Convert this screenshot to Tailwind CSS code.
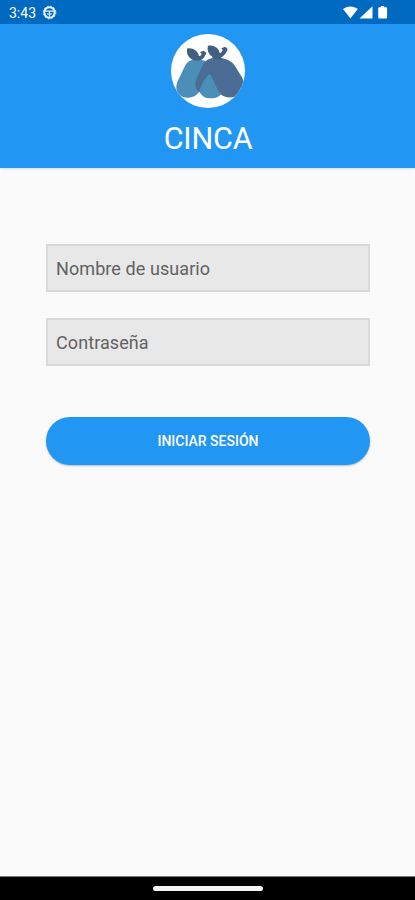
<!DOCTYPE html>
<html lang="es">
<head>
<meta charset="utf-8">
<title>CINCA</title>
<script src="https://cdn.jsdelivr.net/npm/@tailwindcss/browser@4"></script>
</head>
<body class="flex h-[900px] w-[415px] flex-col overflow-hidden bg-[#fafafa] font-['Roboto',sans-serif]">
  <div class="flex h-6 shrink-0 items-center bg-[#0069c0] pl-[9px] pr-[26px] text-white">
    <span class="w-[28px] pt-[2px] text-[14px] leading-none">3:43</span>
    <svg class="ml-[5px] mt-[1px] size-[15px]" viewBox="0 0 15 15" fill="none" stroke="#e8f2fc">
      <circle cx="7.5" cy="7.5" r="5.2" stroke-width="2"/>
      <circle cx="7.5" cy="7.5" r="6.4" stroke-width=".9" stroke-dasharray="1.6 1.75"/>
      <path d="M3 6.200h9M7.500 6.400v5.400M5 9h5" stroke-width="1.200"/>
    </svg>
    <svg class="ml-auto mt-[1px] h-[15px] w-[46px]" viewBox="0 0 46 15" fill="#fff">
      <path d="M0 4.100C4.200.6 10.600.6 14.800 4.100L7.400 13.400Z"/>
      <path d="M29.500 1.300V13.400H16.500Z"/>
      <path d="M37.800 1h3.400v1.200h1.900q1 0 1 1v9.300q0 1-1 1h-6.900q-1 0-1-1V3.200q0-1 1-1h1.600Z"/>
    </svg>
  </div>
  <header class="flex h-36 shrink-0 flex-col items-center bg-[#2196f3] pt-[10px] shadow-[0_1px_2px_rgba(0,0,0,0.12)]">
    <svg class="size-[74px]" viewBox="18 18 222 222">
      <defs><clipPath id="disc"><circle cx="129" cy="129" r="111"/></clipPath></defs>
      <circle cx="129" cy="129" r="111" fill="#fff"/>
      <g clip-path="url(#disc)">
        <path d="M94 94C76 94 65 102 58 118L38 160C26 188 42 209 66 209C84 209 95 202 103 191C110 204 120 211 137 211C153 211 164 205 169 197L150 120C130 100 110 94 94 94Z" fill="#4b8fb9"/>
        <path d="M152 89C134 89 119 97 111 115L94 153C87 170 94 187 103 192C108 172 118 152 134 138C149 157 154 187 170 201C184 212 213 210 227 197C239 184 240 165 231 148L208 111C195 93 174 89 152 89Z" fill="#4b6c94"/>
        <g fill="#415f80">
          <path d="M67 61C84 58 99 68 102 84C105 85 108 82 110 78L105 72L116 68L124 74C121 84 114 97 99 98C91 98 84 97 79 93C68 86 63 73 67 61Z"/>
          <path d="M129 53C146 50 161 59 164 75C168 76 171 71 173 66L169 61L181 56L188 63C185 74 178 83 168 89L172 96L145 92L140 84C129 77 126 65 129 53Z"/>
        </g>
      </g>
    </svg>
    <h1 class="mt-[11px] pl-px text-[30.500px] leading-[39px] tracking-[-0.2px] text-white">CINCA</h1>
  </header>
  <main class="flex flex-1 flex-col pl-[46px] pr-[45px] pt-[76px]">
    <input class="h-12 w-full border-2 border-[#d9d9d9] bg-[#e8e8e8] px-2 text-[18px] tracking-[0.08px] placeholder:text-[#626262] placeholder:opacity-100" type="text" placeholder="Nombre de usuario">
    <input class="mt-[26px] h-12 w-full border-2 border-[#d9d9d9] bg-[#e8e8e8] px-2 text-[18px] tracking-[0.08px] placeholder:text-[#626262] placeholder:opacity-100" type="password" placeholder="Contraseña">
    <button class="mt-[51px] h-12 w-full rounded-full bg-[#2196f3] text-[14px] font-medium text-white shadow-[0_1px_2px_rgba(0,0,0,0.25)]">INICIAR SESIÓN</button>
  </main>
  <footer class="flex h-[24px] shrink-0 justify-center border-t border-[#777] bg-black pt-[9px]">
    <div class="h-[4.500px] w-[110px] rounded-full bg-[#f4f5f4]"></div>
  </footer>
</body>
</html>
